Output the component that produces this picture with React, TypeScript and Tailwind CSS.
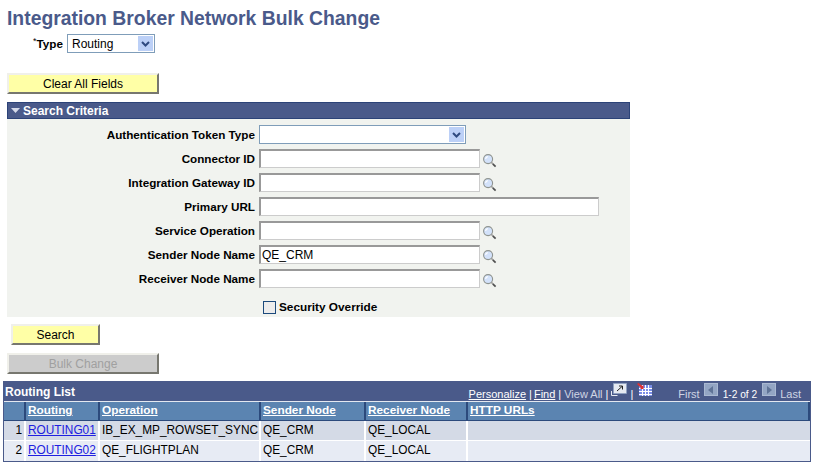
import type { ReactNode } from "react";

const Lookup = () => (
  <svg width="15" height="15" viewBox="0 0 16 16" className="shrink-0">
    <circle cx="6.5" cy="6.5" r="4.8" fill="#d3e2fa" stroke="#8f9490" strokeWidth="1.2" />
    <path d="M3.8 6.2a3 3 0 0 1 2.4-2.4" stroke="#ffffff" strokeWidth="1.3" fill="none" />
    <path d="M10 10l1.5 1.5" stroke="#9a9a9a" strokeWidth="1.6" />
    <path d="M11.5 11.5l3 3" stroke="#4f4f4f" strokeWidth="1.8" />
  </svg>
);

const Arrow = () => (
  <span className="flex h-[15px] w-[15px] items-center justify-center bg-[#bcd0f7]">
    <svg width="9" height="6" viewBox="0 0 9 6">
      <path d="M1 1l3.5 3.5L8 1" stroke="#2f4a80" strokeWidth="2" fill="none" />
    </svg>
  </span>
);

const Button = ({ label, width, disabled }: { label: string; width: string; disabled?: boolean }) => (
  <div
    className={`flex h-[21px] items-center justify-center border-t-2 border-l-2 border-r-2 border-b-2 border-t-[#f0f0ea] border-l-[#f0f0ea] border-r-[#77776f] border-b-[#77776f] text-[12px] ${width} ${
      disabled ? "bg-[#cccccc] text-[#a0a0a0]" : "bg-[#ffffa6] text-black"
    }`}
  >
    {label}
  </div>
);

const Field = ({ label, children }: { label: string; children: ReactNode }) => (
  <div className="flex h-[19px] items-center">
    <label className="w-[252px] pr-[4px] text-right text-[11.7px] font-bold text-black">{label}</label>
    {children}
  </div>
);

const TextInput = ({ width, value, lookup }: { width: string; value?: string; lookup?: boolean }) => (
  <>
    <div
      className={`flex h-[19px] items-center border-t-2 border-l-2 border-r border-b border-t-[#999999] border-l-[#999999] border-r-[#cccccc] border-b-[#cccccc] bg-white pl-[1px] text-[12px] ${width}`}
    >
      {value}
    </div>
    {lookup && (
      <span className="ml-[2px] mt-[4px]">
        <Lookup />
      </span>
    )}
  </>
);

const Th = ({ children, width, last }: { children?: ReactNode; width: string; last?: boolean }) => (
  <div
    className={`flex h-[18px] items-center border-r-2 border-r-[#2c4a7c] pl-[2px] text-[11.8px] font-bold text-white underline ${width} ${last ? "grow" : ""}`}
  >
    {children}
  </div>
);

const Td = ({ children, width, right, last }: { children?: ReactNode; width: string; right?: boolean; last?: boolean }) => (
  <div
    className={`flex items-center pl-[2px] text-[11.85px] text-black ${width} ${right ? "justify-end pr-[2px]" : ""} ${
      last ? "grow" : "border-r-2 border-r-white"
    }`}
  >
    {children}
  </div>
);

const PageBtn = ({ d }: { d: string }) => (
  <span className="mb-[5px] flex h-[13px] w-[14px] items-center justify-center border border-[#a9b8d2] bg-[#93a5c4]">
    <svg width="5" height="8" viewBox="0 0 5 8">
      <path d={d} fill="#5f7397" />
    </svg>
  </span>
);

const rows = [
  { n: 1, id: "ROUTING01", op: "IB_EX_MP_ROWSET_SYNC", bg: "bg-[#d4dae6]" },
  { n: 2, id: "ROUTING02", op: "QE_FLIGHTPLAN", bg: "bg-[#e7ebf4]" },
];

export default function App() {
  return (
    <div className="h-[474px] w-[832px] overflow-hidden bg-white pt-[7px] font-['Liberation_Sans',Arial,sans-serif] text-black">
      {/* Title */}
      <h1 className="ml-[7px] h-[27px] text-[19.35px] font-bold leading-[22px] text-[#4a5a8a]">
        Integration Broker Network Bulk Change
      </h1>

      {/* Type */}
      <div className="flex h-[19px] items-center">
        <span className="w-[63px] text-right text-[11.7px] font-bold">
          <span className="align-top text-[9px] font-normal">*</span>Type
        </span>
        <div className="ml-[4px] flex h-[19px] w-[88px] items-center justify-between border border-[#7f9db9] bg-white pl-[4px] pr-[1px] text-[12px]">
          Routing
          <Arrow />
        </div>
      </div>

      <div className="ml-[7px] mt-[20px] w-[152px]">
        <Button label="Clear All Fields" width="w-[152px]" />
      </div>

      {/* Search Criteria */}
      <div className="ml-[7px] mt-[8px] w-[623px]">
        <div className="flex h-[17px] items-center border border-[#2c4378] bg-[#4a5a8a] pl-[3px] text-[12px] font-bold text-white">
          <svg width="9" height="5" viewBox="0 0 9 5" className="mr-[3px]">
            <path d="M0 0h9L4.5 5z" fill="#d5daea" />
          </svg>
          Search Criteria
        </div>
        <div className="flex h-[198px] flex-col gap-[5px] bg-[#f1f3ef] pt-[6px]">
          <Field label="Authentication Token Type">
            <div className="flex h-[19px] w-[207px] items-center justify-end border border-[#7f9db9] bg-white pr-[1px]">
              <Arrow />
            </div>
          </Field>
          <Field label="Connector ID">
            <TextInput width="w-[221px]" lookup />
          </Field>
          <Field label="Integration Gateway ID">
            <TextInput width="w-[221px]" lookup />
          </Field>
          <Field label="Primary URL">
            <TextInput width="w-[340px]" />
          </Field>
          <Field label="Service Operation">
            <TextInput width="w-[221px]" lookup />
          </Field>
          <Field label="Sender Node Name">
            <TextInput width="w-[221px]" value="QE_CRM" lookup />
          </Field>
          <Field label="Receiver Node Name">
            <TextInput width="w-[221px]" lookup />
          </Field>
          <div className="ml-[256px] mt-[7px] flex h-[15px] items-center">
            <span className="h-[13px] w-[13px] border border-[#1c4a7c] bg-[#ececec]" />
            <span className="ml-[3px] text-[11.8px] font-bold">Security Override</span>
          </div>
        </div>
      </div>

      <div className="ml-[11px] mt-[7px]">
        <Button label="Search" width="w-[89px]" />
      </div>
      <div className="ml-[7px] mt-[8px]">
        <Button label="Bulk Change" width="w-[152px]" disabled />
      </div>

      {/* Routing List */}
      <div className="ml-[3px] mt-[7px] w-[808px] border-x border-b border-[#4a5a8a]">
        <div className="flex h-[20px] items-end bg-[#4a5a8a] pl-[1px] text-white">
          <span className="text-[12px] font-bold leading-[18px]">Routing List</span>
          <div className="ml-auto flex h-full items-end pr-[9px] text-[11px] leading-[13px]">
            <span className="underline">Personalize</span>
            <span className="ml-[3px] mr-[2px]">|</span>
            <span className="underline">Find</span>
            <span className="mx-[3px]">|</span>
            <span className="text-[#cfd5e4]">View All</span>
            <span className="mx-[3px]">|</span>
            <svg width="16" height="13" viewBox="0 0 16 13" className="mb-[5px]">
              <path d="M0.5 8v4.5h6" fill="none" stroke="#e6eaf2" />
              <rect x="2.5" y="0.5" width="13" height="10" fill="#e6eaf2" stroke="#8fa3c5" strokeDasharray="2 1" />
              <path d="M6 8l5-4.5M8 3h3.5v3.5" stroke="#222" fill="none" />
            </svg>
            <span className="ml-[3px] mr-[4px]">|</span>
            <svg width="15" height="13" viewBox="0 0 15 13" className="mb-[5px]">
              <rect x="2" y="2" width="13" height="11" fill="#7a8ee8" />
              <path d="M2 5.5h13M2 8.5h13M2 11.5h13M5.5 2v11M8.5 2v11M11.5 2v11" stroke="#ffffff" strokeWidth="1" />
              <path d="M0 1l1.5-1 4 3 1-1v4H3l1-1z" fill="#e03030" />
            </svg>
            <span className="ml-[26px] text-[#cfd5e4]">First</span>
            <span className="ml-[4px]">
              <PageBtn d="M5 0v8L0 4z" />
            </span>
            <span className="ml-[5px] text-[10.2px]">1-2 of 2</span>
            <span className="ml-[5px]">
              <PageBtn d="M0 0v8l5-4z" />
            </span>
            <span className="ml-[4px] text-[#cfd5e4]">Last</span>
          </div>
        </div>
        <div className="flex border-y border-t-[#e4e8f0] border-b-[#2c4a7c] bg-[#5b84b1]">
          <Th width="w-[22px]" />
          <Th width="w-[74px]">Routing</Th>
          <Th width="w-[161px]">Operation</Th>
          <Th width="w-[105px]">Sender Node</Th>
          <Th width="w-[102px]">Receiver Node</Th>
          <Th width="" last>HTTP URLs</Th>
        </div>
        {rows.map((r) => (
          <div key={r.n} className={`flex h-[20px] border-b border-b-white last:border-b-0 ${r.bg}`}>
            <Td width="w-[22px]" right>{r.n}</Td>
            <Td width="w-[74px]">
              <span className="text-[#2020e0] underline">{r.id}</span>
            </Td>
            <Td width="w-[161px]">{r.op}</Td>
            <Td width="w-[105px]">QE_CRM</Td>
            <Td width="w-[102px]">QE_LOCAL</Td>
            <Td width="" last />
          </div>
        ))}
      </div>
    </div>
  );
}
